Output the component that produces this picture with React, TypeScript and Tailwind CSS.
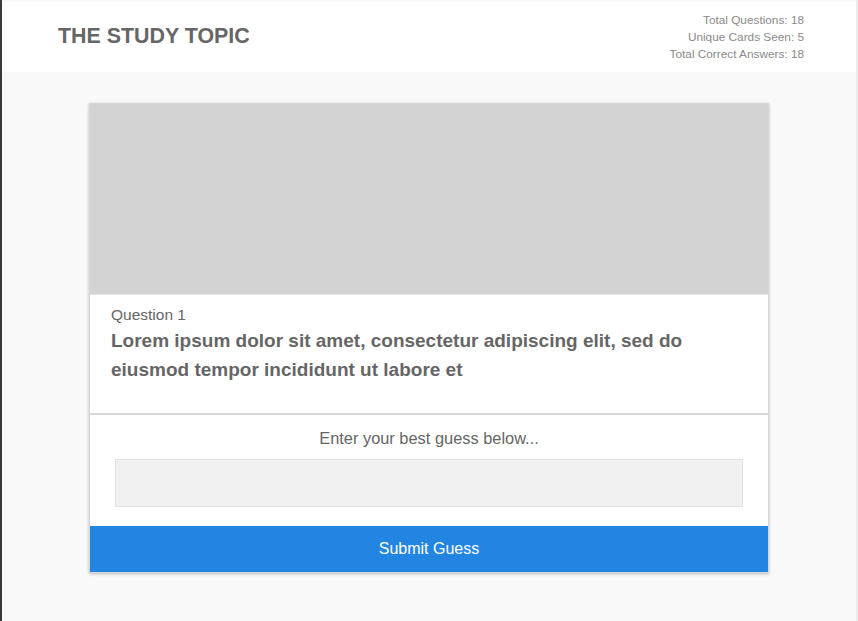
const stats = [
  { label: 'Total Questions', value: 18 },
  { label: 'Unique Cards Seen', value: 5 },
  { label: 'Total Correct Answers', value: 18 },
];

export default function App() {
  return (
    <div
      className="min-h-[621px] border-l-2 border-l-[#3a3a3a] border-r-2 border-r-[#ececec] bg-[#f9f9f9] pt-[2px] text-[#666]"
      style={{ fontFamily: '"Liberation Sans", Arial, sans-serif' }}
    >
      <header className="flex h-[70px] items-start justify-between bg-white pl-[56px] pr-[52px]">
        <h1 className="pt-[22px] text-[21.4px] font-bold leading-[24px] text-[#666]">THE STUDY TOPIC</h1>
        <div className="flex flex-col items-end pt-[10px] text-[11.8px] leading-[17px] text-[#8a8a8a]">
          {stats.map((s) => (
            <p key={s.label}>
              {s.label}: {s.value}
            </p>
          ))}
        </div>
      </header>

      <main className="flex justify-center pt-[31px]">
        <div className="flex w-[680px] flex-col border border-[#d6d6d6] bg-white shadow-[0_1px_3px_rgba(0,0,0,0.25)]">
          <div className="h-[190px] bg-[#d3d3d3]" />
          <div className="border-t border-[#e4e4e4] px-[21px] pb-[29px] pt-[11px]">
            <p className="text-[15.5px] leading-[18px] text-[#666]">Question 1</p>
            <p className="pt-[2px] text-[19px] font-bold leading-[29px] text-[#666]">
              Lorem ipsum dolor sit amet, consectetur adipiscing elit, sed do eiusmod tempor incididunt ut labore et
            </p>
          </div>
          <div className="border-t-2 border-[#d8d8d8] px-[25px] pb-[19px] pt-[13px]">
            <p className="text-center text-[16.4px] leading-[20px] text-[#666]">Enter your best guess below...</p>
            <input
              type="text"
              className="mt-[11px] block h-[48px] w-full border border-[#e2e2e2] bg-[#f1f1f1] px-3 outline-none"
            />
          </div>
          <button className="h-[46px] w-full bg-[#2385e2] text-[16px] text-white">Submit Guess</button>
        </div>
      </main>
    </div>
  );
}
